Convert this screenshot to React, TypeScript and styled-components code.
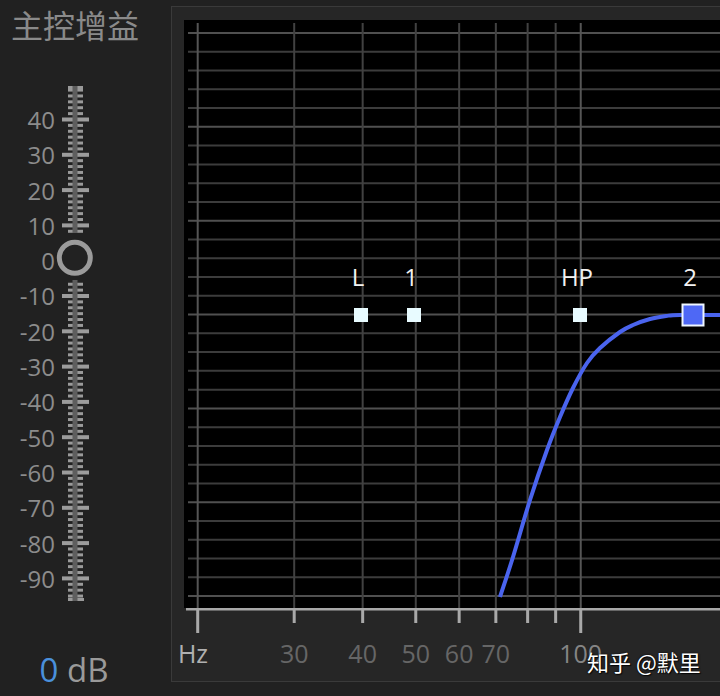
import React from "react";
import styled, { createGlobalStyle } from "styled-components";

const Global = createGlobalStyle`
  html, body { margin: 0; padding: 0; background: #212121; }
  body { font-family: "Open Sans", "Noto Sans CJK SC", sans-serif; }
`;

const Screen = styled.div`
  position: relative;
  width: 720px;
  height: 696px;
  overflow: hidden;
  display: flex;
  align-items: flex-start;
  background: #212121;
`;

const Sidebar = styled.div`
  width: 171px;
  height: 696px;
  flex-shrink: 0;
  display: flex;
  flex-direction: column;
`;

const Title = styled.div`
  margin: 9px 0 0 11px;
  font-family: "Noto Sans CJK SC", sans-serif;
  font-size: 32px;
  line-height: 31px;
  color: #8a8a8a;
  white-space: nowrap;
`;

const Slider = styled.div`
  margin-top: 44px;
  display: flex;
  height: 520px;
`;

const LabelColumn = styled.div`
  width: 55px;
  padding-top: 17.85px;
  display: flex;
  flex-direction: column;
`;

const ScaleLabel = styled.div`
  height: 35.3px;
  display: flex;
  align-items: center;
  justify-content: flex-end;
  font-size: 24px;
  color: #8c8c8c;
`;

const ScaleSvg = styled.svg`
  display: block;
  width: 40px;
  height: 520px;
`;

const Readout = styled.div`
  margin-top: auto;
  margin-bottom: 10px;
  width: 148px;
  text-align: center;
  font-size: 33px;
  line-height: 33px;
  color: #9a9a9a;
`;

const Accent = styled.span`
  color: #4a90dc;
`;

const Panel = styled.div`
  margin-top: 6px;
  flex-shrink: 0;
  width: 560px;
  border: 1px solid #3a3a3a;
  background: #262626;
  padding: 13px 0 11px 12px;
  display: flex;
  flex-direction: column;
`;

const PlotArea = styled.div`
  height: 588px;
  background: #000;
  overflow: hidden;
`;

const PlotSvg = styled.svg`
  display: block;
  width: 548px;
  height: 588px;
`;

const AxisSvg = styled.svg`
  display: block;
  width: 548px;
  height: 62px;
  overflow: visible;
`;

const NodeLabel = styled.text`
  font-family: "Open Sans", sans-serif;
  font-size: 24px;
  fill: #f2f2f2;
`;

const FreqLabel = styled.text<{ $tone: "dim" | "mid" | "bright" }>`
  font-family: "Open Sans", sans-serif;
  font-size: 25px;
  fill: ${(p) => (p.$tone === "bright" ? "#b0b0b0" : p.$tone === "mid" ? "#858585" : "#666666")};
`;

const Watermark = styled.div`
  position: absolute;
  left: 587px;
  top: 650px;
  font-family: "Noto Sans CJK SC", sans-serif;
  font-size: 22px;
  line-height: 22px;
  color: #ffffff;
  white-space: nowrap;
  text-shadow: 0 0 2px #000, 1px 1px 1px rgba(0, 0, 0, 0.8);
`;

/* ---------- slider scale ---------- */
const STEP = 35.3;
const Y0 = 35.5;
const scaleValues = [40, 30, 20, 10, 0, -10, -20, -30, -40, -50, -60, -70, -80, -90];

function SliderScale() {
  const ticks: React.ReactNode[] = [];
  for (let i = -5; i <= 81; i++) {
    if (i >= 20 && i <= 27) continue;
    const y = Y0 + (i * STEP) / 6;
    const major = i >= 0 && i % 6 === 0;
    if (major) {
      ticks.push(<rect key={i} x={7} y={y - 2} width={27} height={4} fill="#9c9c9c" />);
    } else {
      ticks.push(<rect key={i} x={13} y={y - 1.5} width={15} height={3} fill="#9a9a9a" />);
    }
  }
  const knobY = Y0 + 4 * STEP - 3;
  return (
    <ScaleSvg viewBox="0 0 40 520">
      <rect x={13} y={2} width={15} height={3} fill="#9a9a9a" />
      {ticks}
      <rect x={13} y={514} width={16} height={3} fill="#9a9a9a" />
      <rect x={17.5} y={2} width={5} height={147} fill="#5e5e5e" />
      <rect x={17.5} y={196} width={5} height={321} fill="#5e5e5e" />
      <circle cx={19.8} cy={knobY} r={15.5} fill="#222" stroke="#9b9b9b" strokeWidth={5} />
    </ScaleSvg>
  );
}

/* ---------- EQ plot ---------- */
const PX_PER_DEC = 548;
const X20 = 13.7;
const fx = (f: number) => X20 + PX_PER_DEC * Math.log10(f / 20);
const freqs = [20, 30, 40, 50, 60, 70, 80, 90, 100];
const rowY = (k: number) => 13 + k * 18.77;

function smooth(pts: [number, number][]) {
  let d = `M${pts[0][0]},${pts[0][1]}`;
  for (let i = 0; i < pts.length - 1; i++) {
    const p0 = pts[i - 1] || pts[i];
    const p1 = pts[i];
    const p2 = pts[i + 1];
    const p3 = pts[i + 2] || p2;
    const c1 = [p1[0] + (p2[0] - p0[0]) / 6, p1[1] + (p2[1] - p0[1]) / 6];
    const c2 = [p2[0] - (p3[0] - p1[0]) / 6, p2[1] - (p3[1] - p1[1]) / 6];
    d += ` C${c1[0]},${c1[1]} ${c2[0]},${c2[1]} ${p2[0]},${p2[1]}`;
  }
  return d;
}

const curvePts: [number, number][] = [
  [316, 577],
  [329, 537],
  [346, 480],
  [363, 430],
  [376, 397],
  [389, 368],
  [403, 343],
  [416, 328],
  [436, 312],
  [449, 305],
  [466, 299],
  [482, 296],
  [496, 295],
  [548, 295],
];

const NODE_Y = 295;
const nodes = [
  { label: "L", x: 177 },
  { label: "1", x: 230 },
  { label: "HP", x: 396 },
];

function Plot() {
  return (
    <PlotSvg viewBox="0 0 548 588">
      {Array.from({ length: 31 }, (_, k) => (
        <line
          key={`h${k}`}
          x1={4}
          x2={548}
          y1={rowY(k)}
          y2={rowY(k)}
          stroke={k % 5 === 0 ? "#505050" : "#3c3c3c"}
          strokeWidth={2}
        />
      ))}
      {freqs.map((f) => (
        <line
          key={`v${f}`}
          x1={fx(f)}
          x2={fx(f)}
          y1={3}
          y2={588}
          stroke={f === 20 || f === 100 ? "#555555" : "#414141"}
          strokeWidth={2}
        />
      ))}
      <path d={smooth(curvePts)} fill="none" stroke="#4a64ee" strokeWidth={4} />
      {nodes.map((n) => (
        <g key={n.label}>
          <NodeLabel x={n.x - 3} y={266} textAnchor="middle">
            {n.label}
          </NodeLabel>
          <rect x={n.x - 7} y={NODE_Y - 7} width={14} height={14} fill="#e8fbff" />
        </g>
      ))}
      <NodeLabel x={506} y={266} textAnchor="middle">
        2
      </NodeLabel>
      <rect x={498.5} y={NODE_Y - 10.5} width={21} height={21} fill="#4e68f5" stroke="#eef6ff" strokeWidth={2} />
    </PlotSvg>
  );
}

const axisLabels: { text: string; x: number; tone: "dim" | "mid" | "bright" }[] = [
  { text: "Hz", x: 9, tone: "bright" },
  { text: "30", x: fx(30), tone: "dim" },
  { text: "40", x: fx(40), tone: "dim" },
  { text: "50", x: fx(50), tone: "dim" },
  { text: "60", x: fx(60), tone: "dim" },
  { text: "70", x: fx(70), tone: "dim" },
  { text: "100", x: fx(100), tone: "mid" },
];

function Axis() {
  return (
    <AxisSvg viewBox="0 0 548 62">
      <rect x={2} y={0} width={546} height={2.5} fill="#a8a8a8" />
      {freqs.map((f) => (
        <rect
          key={f}
          x={fx(f) - 1.5}
          y={2}
          width={3}
          height={f === 20 || f === 100 ? 23 : 13}
          fill="#a9a9a9"
        />
      ))}
      {axisLabels.map((l) => (
        <FreqLabel key={l.text} x={l.x} y={55} textAnchor="middle" $tone={l.tone}>
          {l.text}
        </FreqLabel>
      ))}
    </AxisSvg>
  );
}

export default function App() {
  return (
    <>
      <Global />
      <Screen>
        <Sidebar>
          <Title>主控增益</Title>
          <Slider>
            <LabelColumn>
              {scaleValues.map((v) => (
                <ScaleLabel key={v}>{v}</ScaleLabel>
              ))}
            </LabelColumn>
            <SliderScale />
          </Slider>
          <Readout>
            <Accent>0</Accent> dB
          </Readout>
        </Sidebar>
        <Panel>
          <PlotArea>
            <Plot />
          </PlotArea>
          <Axis />
        </Panel>
        <Watermark>知乎 @默里</Watermark>
      </Screen>
    </>
  );
}
